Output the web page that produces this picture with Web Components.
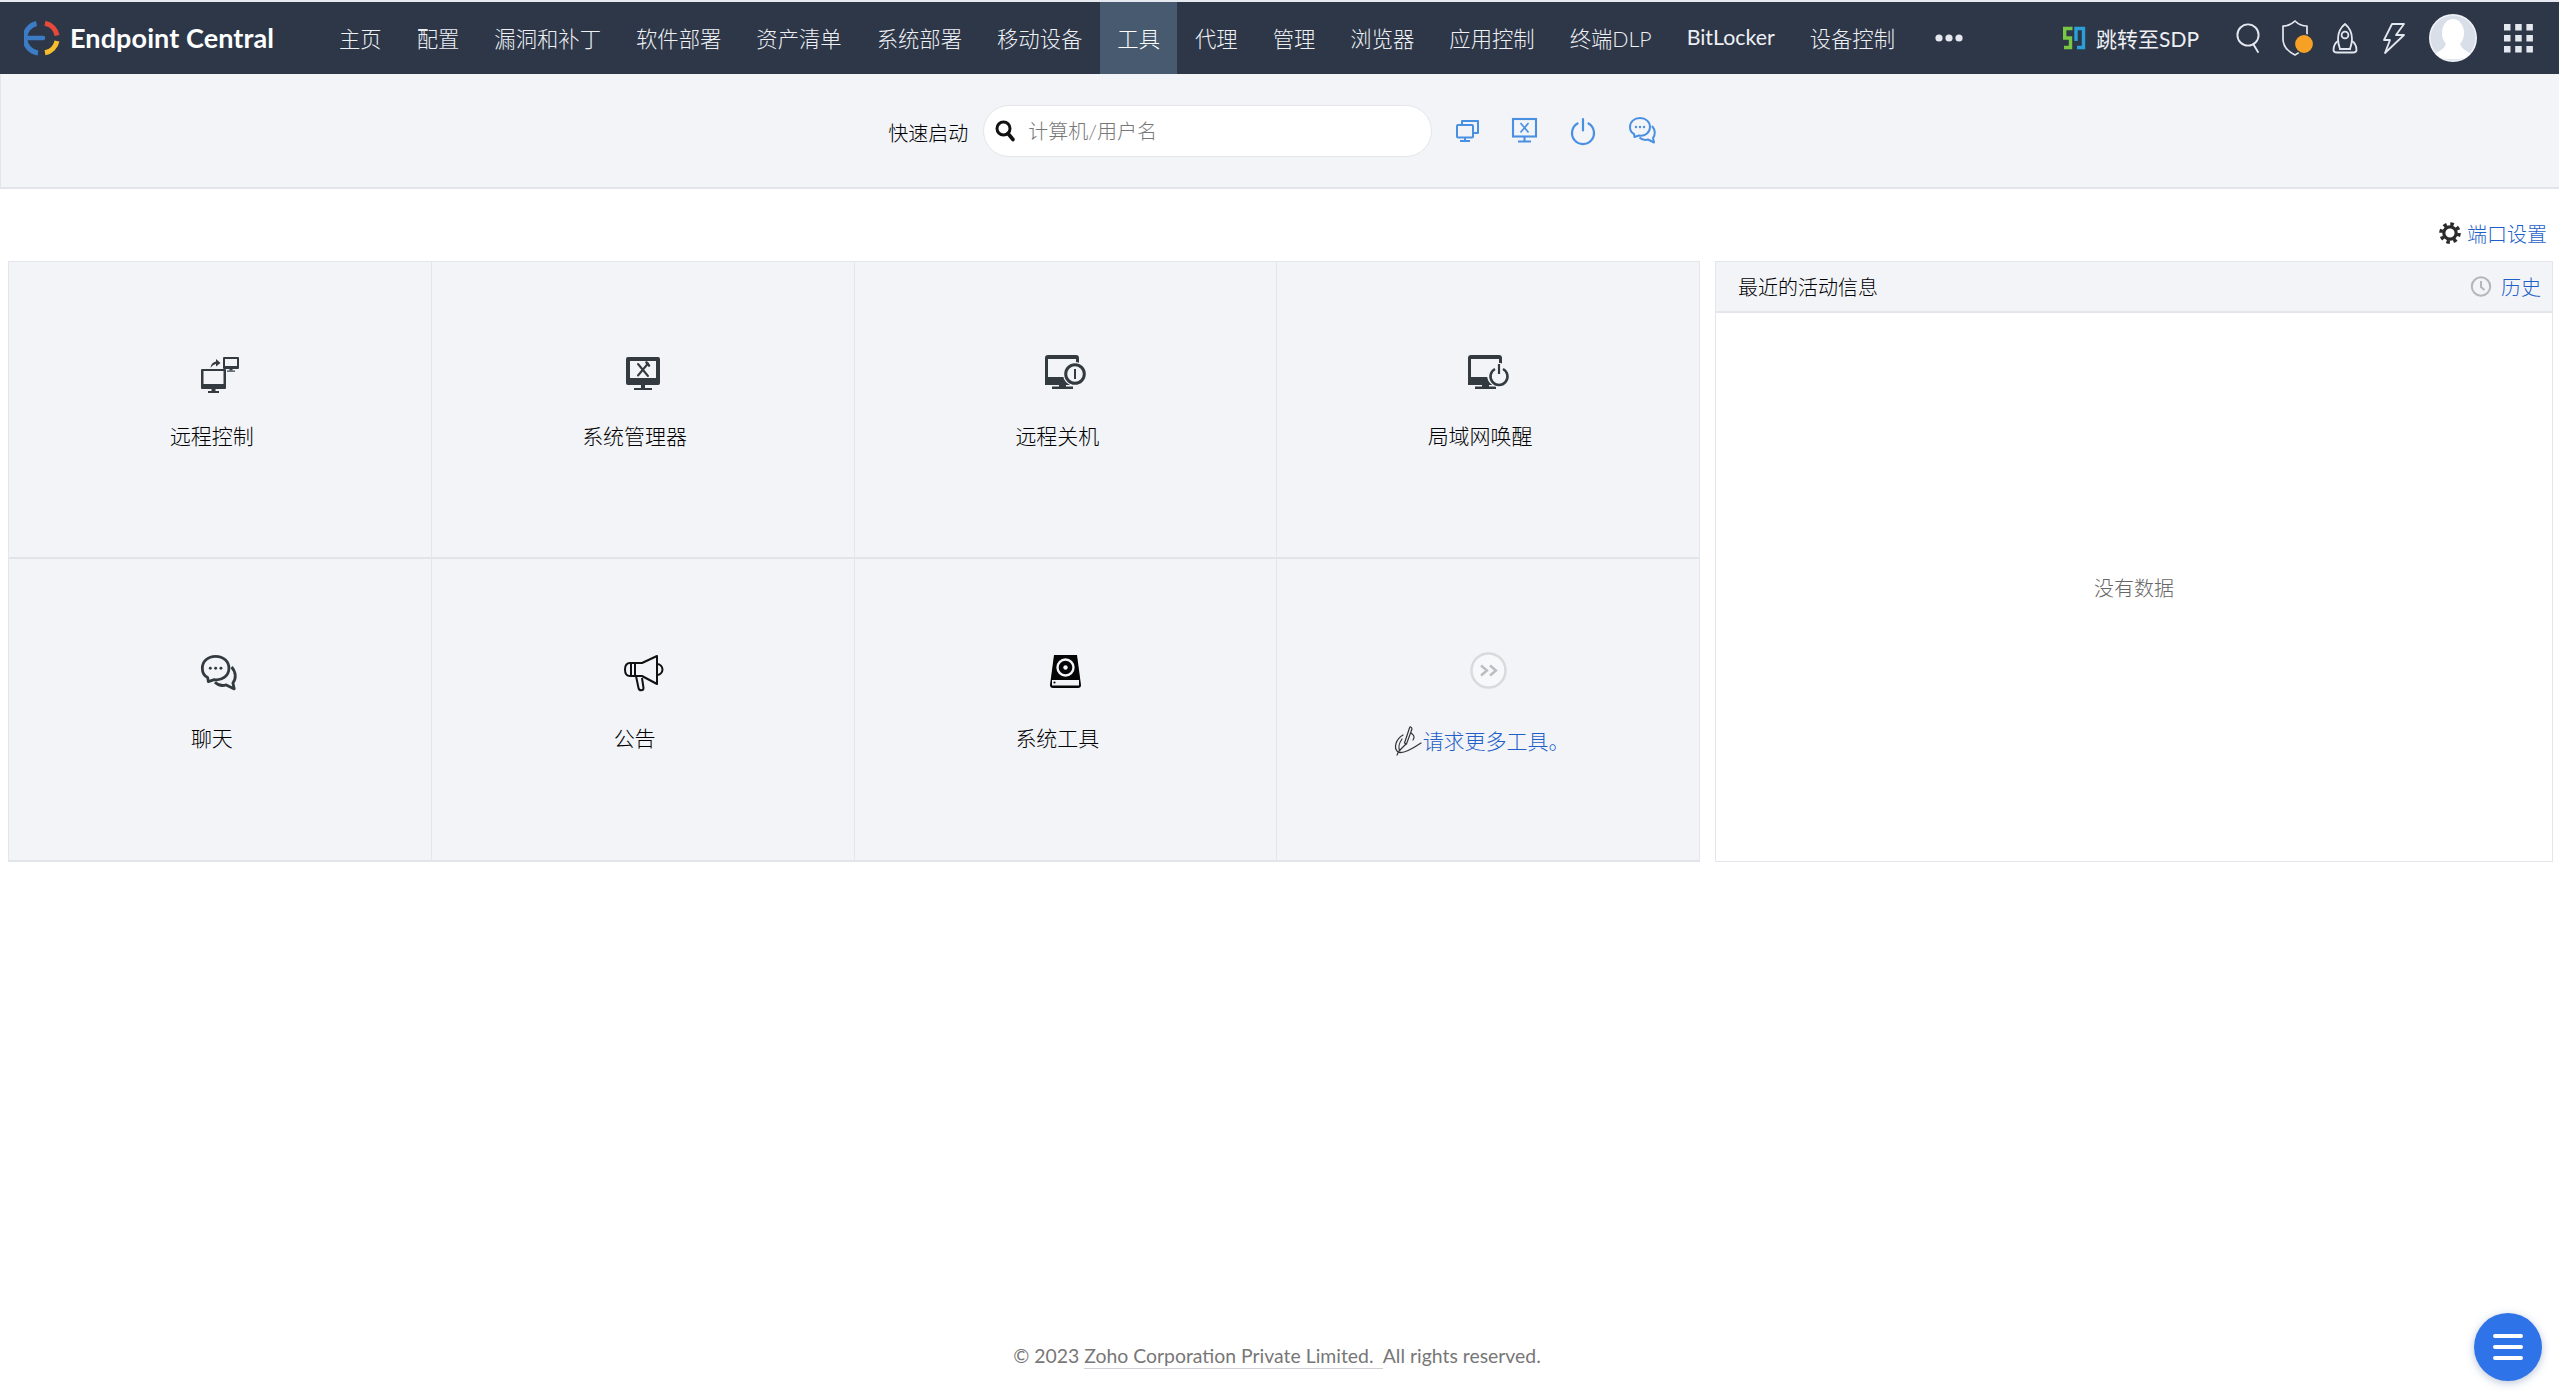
<!DOCTYPE html>
<html lang="zh-CN">
<head>
<meta charset="utf-8">
<title>Endpoint Central</title>
<style>
html,body{margin:0;padding:0;height:100%;overflow:hidden;background:#fff}
body{font-family:Lato,"Noto Sans CJK SC",sans-serif;font-size:20px;color:#333}
</style>
</head>
<body>
<ec-app>
  <ec-header slot="header">
    <ec-logo slot="logo">Endpoint Central</ec-logo>
    <ec-nav-item>主页</ec-nav-item>
    <ec-nav-item>配置</ec-nav-item>
    <ec-nav-item>漏洞和补丁</ec-nav-item>
    <ec-nav-item>软件部署</ec-nav-item>
    <ec-nav-item>资产清单</ec-nav-item>
    <ec-nav-item>系统部署</ec-nav-item>
    <ec-nav-item>移动设备</ec-nav-item>
    <ec-nav-item active>工具</ec-nav-item>
    <ec-nav-item>代理</ec-nav-item>
    <ec-nav-item>管理</ec-nav-item>
    <ec-nav-item>浏览器</ec-nav-item>
    <ec-nav-item>应用控制</ec-nav-item>
    <ec-nav-item>终端DLP</ec-nav-item>
    <ec-nav-item style="font-weight:400">BitLocker</ec-nav-item>
    <ec-nav-item>设备控制</ec-nav-item>
    <ec-icon slot="more" name="dots"></ec-icon>
    <ec-sdp-link slot="tools">跳转至SDP</ec-sdp-link>
    <ec-icon slot="tools" name="hsearch" style="margin-left:37px"></ec-icon>
    <ec-icon slot="tools" name="shield" style="margin-left:19px"></ec-icon>
    <ec-icon slot="tools" name="rocket" style="margin-left:17px"></ec-icon>
    <ec-icon slot="tools" name="bolt" style="margin-left:25px"></ec-icon>
    <ec-icon slot="tools" name="avatar" style="margin-left:24px"></ec-icon>
    <ec-icon slot="tools" name="apps" style="margin-left:27px"></ec-icon>
  </ec-header>

  <ec-quick-bar slot="quick">
    <span slot="label">快速启动</span>
    <ec-search-field slot="field">计算机/用户名</ec-search-field>
    <ec-icon slot="actions" name="bmonitors" style="margin-left:23.500px"></ec-icon>
    <ec-icon slot="actions" name="btools" style="margin-left:32px"></ec-icon>
    <ec-icon slot="actions" name="bpower" style="margin-left:34px"></ec-icon>
    <ec-icon slot="actions" name="bchat" style="margin-left:34px"></ec-icon>
  </ec-quick-bar>

  <ec-settings-link slot="settings">端口设置</ec-settings-link>

  <ec-tool-grid slot="tools">
    <ec-tool-tile style="--pad:95px;--gap:31px"><ec-icon slot="icon" name="remote"></ec-icon>远程控制</ec-tool-tile>
    <ec-tool-tile style="--pad:95px;--gap:31px"><ec-icon slot="icon" name="sysmgr"></ec-icon>系统管理器</ec-tool-tile>
    <ec-tool-tile style="--pad:93px;--gap:33px"><ec-icon slot="icon" name="shutdown"></ec-icon>远程关机</ec-tool-tile>
    <ec-tool-tile style="--pad:93px;--gap:33px" last><ec-icon slot="icon" name="wol"></ec-icon>局域网唤醒</ec-tool-tile>
    <ec-tool-tile style="--pad:96px;--gap:34.500px" bottom><ec-icon slot="icon" name="chat"></ec-icon>聊天</ec-tool-tile>
    <ec-tool-tile style="--pad:96px;--gap:34.500px" bottom><ec-icon slot="icon" name="mega"></ec-icon>公告</ec-tool-tile>
    <ec-tool-tile style="--pad:96px;--gap:34.500px" bottom><ec-icon slot="icon" name="disk"></ec-icon>系统工具</ec-tool-tile>
    <ec-tool-tile style="--pad:93px;--gap:38px" bottom last><ec-icon slot="icon" name="more"></ec-icon><ec-request-link>请求更多工具。</ec-request-link></ec-tool-tile>
  </ec-tool-grid>

  <ec-activity-panel slot="panel">
    <span slot="title">最近的活动信息</span>
    <span slot="history">历史</span>
    没有数据
  </ec-activity-panel>

  <ec-footer slot="footer">© 2023 <u>Zoho Corporation Private Limited.&nbsp; </u>All rights reserved.</ec-footer>
  <ec-fab slot="fab"></ec-fab>
</ec-app>

<script>
const BLUE='#4a90e2', DK='#333a40', HL='#e4e7ee', BG='#f2f4f8', HD='#2d3748';
const ICONS={
 dots:[28,8,`<g fill="${HL}"><circle cx="4" cy="4" r="3.6"/><circle cx="14" cy="4" r="3.6"/><circle cx="24" cy="4" r="3.6"/></g>`],
 hsearch:[26,29,`<g fill="none" stroke="${HL}" stroke-width="1.9"><circle cx="12" cy="11" r="10.6"/><path d="M17.5 20.5L22 28" stroke-linecap="round"/></g>`],
 shield:[34,36,`<path d="M14 1C10.5 4.500 6 6 2 6V19C2 27 8 32 14 35C20 32 26 27 26 19V6C22 6 17.500 4.500 14 1Z" fill="none" stroke="${HL}" stroke-width="1.700" stroke-linejoin="round"/><circle cx="23" cy="24" r="9.600" fill="#f6a125" stroke="${HD}" stroke-width="1.400"/>`],
 rocket:[26,31,`<g fill="none" stroke="${HL}" stroke-width="1.800" stroke-linejoin="round"><path d="M13 1C8 5 6 10 6 16C6 20 7 23 8 26H18C19 23 20 20 20 16C20 10 18 5 13 1Z"/><circle cx="13" cy="12" r="3.400"/><path d="M6 18C3 20 1.500 23 1.500 27C1.500 29 3 29.500 5 29.500H21C23 29.500 24.500 29 24.500 27C24.500 23 23 20 20 18"/><path d="M7 26H19"/></g>`],
 bolt:[22,31,`<path d="M9 1H21L13 12H21L2 30L7 17H1Z" fill="none" stroke="${HL}" stroke-width="1.800" stroke-linejoin="round"/>`],
 avatar:[48,48,`<defs><clipPath id="c"><circle cx="24" cy="24" r="23.500"/></clipPath></defs><circle cx="24" cy="24" r="24" fill="#f1f3f7"/><g clip-path="url(#c)"><circle cx="24" cy="24" r="22.500" fill="#d9dfe9"/><ellipse cx="24" cy="19" rx="11" ry="14" fill="#fff"/><path d="M17 28C17 34 12 36 6 40C10 47 38 47 42 40C36 36 31 34 31 28Z" fill="#fff"/></g>`],
 apps:[29,28,`<g fill="${HL}">${[0,11,22].map(y=>[0,11.200,22.400].map(x=>`<rect x="${x}" y="${y}" width="6.500" height="6.500"/>`).join('')).join('')}</g>`],
 bmonitors:[24,23,`<g fill="none" stroke="${BLUE}" stroke-width="2" stroke-linejoin="round"><rect x="1" y="6" width="16" height="12.500" rx="1"/><path d="M6 6V2H22V14H17"/><path d="M9 18.500V21.500M4 22H14"/></g>`],
 btools:[25,25,`<g fill="none" stroke="${BLUE}" stroke-width="2.100"><rect x="1" y="1" width="23" height="17.500"/><path d="M12.500 18.500V23M6 23.500H19"/><path d="M8.500 5L16.500 14.500M16.500 5L8.500 14.500" stroke-width="1.700"/></g>`],
 bpower:[24,26,`<g fill="none" stroke="${BLUE}" stroke-width="2.200" stroke-linecap="round"><path d="M6.500 5.500A11 11 0 1 0 17.500 5.500"/><path d="M12 1V12.500"/></g>`],
 bchat:[28,27,`<g fill="none" stroke="${BLUE}" stroke-width="2" stroke-linejoin="round"><path d="M11 1C5 1 1 5 1 10C1 13.500 3 16 5 17L5.500 20L10 18.500C16 19.500 21 15.500 21 10C21 5 17 1 11 1Z"/><path d="M23 9C26.500 13 26.500 18 24 21L25 25.500L19 22.500C15.500 23.500 12.500 22.500 10.500 20.500"/></g><g fill="${BLUE}"><circle cx="7" cy="10" r="1.200"/><circle cx="11" cy="10" r="1.200"/><circle cx="15" cy="10" r="1.200"/></g>`],
 qsearch:[20,21,`<g fill="none" stroke="#111"><circle cx="8.500" cy="8.500" r="6.500" stroke-width="3"/><path d="M13 13.500L18 19.500" stroke-width="3.600" stroke-linecap="round"/></g>`],
 remote:[38,36,`<g fill="${DK}"><path fill-rule="evenodd" d="M1 12H24Q25 12 25 13V31Q25 32 24 32H1Q0 32 0 31V13Q0 12 1 12ZM2.500 14V27H22.500V14Z"/><rect x="10.500" y="32" width="4" height="2"/><rect x="7" y="34" width="11" height="2"/><path fill-rule="evenodd" d="M23 0H37Q38 0 38 1V11Q38 12 37 12H23Q22 12 22 11V1Q22 0 23 0ZM24 2V9H36V2Z"/><rect x="28.500" y="12" width="3" height="1.500"/><rect x="26" y="13.500" width="8" height="1.200"/><path d="M9.500 11C10 7 12 5 15 4.500V2L19.500 6L15 9.500V7C13 7.500 11 8.500 9.500 11Z"/></g>`],
 sysmgr:[34,33,`<g fill="${DK}"><path fill-rule="evenodd" d="M2 0H32Q34 0 34 2V26Q34 28 32 28H2Q0 28 0 26V2Q0 0 2 0ZM4 4V21H30V4Z"/><rect x="15" y="28" width="4" height="3"/><rect x="8" y="31" width="18" height="2"/></g><g fill="none" stroke="${DK}" stroke-linecap="round"><path d="M12 7L22 19" stroke-width="2"/><path d="M22 6.500L12 18.500" stroke-width="2"/><path d="M20.500 5.500L23 8.500" stroke-width="2.600"/></g>`],
 shutdown:[40,34,`<path fill="${DK}" fill-rule="evenodd" d="M3 0H31Q34 0 34 3V30H0V3Q0 0 3 0ZM3 4V22H31V4Z"/><rect x="14" y="30" width="7" height="2" fill="${DK}"/><rect x="7" y="31.500" width="21" height="2.500" fill="${DK}"/><circle cx="30" cy="19" r="12" fill="${BG}"/><circle cx="30" cy="19" r="9.300" fill="none" stroke="${DK}" stroke-width="3"/><rect x="29" y="14" width="2" height="10" fill="${DK}"/>`],
 wol:[40,34,`<path fill="${DK}" fill-rule="evenodd" d="M3 0H31Q34 0 34 3V30H0V3Q0 0 3 0ZM3 4V22H31V4Z"/><rect x="14" y="30" width="7" height="2" fill="${DK}"/><rect x="7" y="31.500" width="21" height="2.500" fill="${DK}"/><circle cx="31" cy="20" r="12" fill="${BG}"/><rect x="29" y="8" width="4" height="6" fill="${BG}"/><path d="M27 14A8.500 8.500 0 1 0 35 14" fill="none" stroke="${DK}" stroke-width="2.500"/><path d="M31 9V19" stroke="${DK}" stroke-width="2.200"/>`],
 chat:[37,36,`<g transform="scale(1.330)"><g fill="none" stroke="${DK}" stroke-width="2.100" stroke-linejoin="round"><path d="M11 1C5 1 1 5 1 10C1 13.500 3 16 5 17L5.500 20L10 18.500C16 19.500 21 15.500 21 10C21 5 17 1 11 1Z"/><path d="M23 9C26.500 13 26.500 18 24 21L25 25.500L19 22.500C15.500 23.500 12.500 22.500 10.500 20.500"/></g><g fill="${DK}"><circle cx="7" cy="10" r="1.100"/><circle cx="11" cy="10" r="1.100"/><circle cx="15" cy="10" r="1.100"/></g></g>`],
 mega:[38,36,`<g fill="none" stroke="#111" stroke-width="2" stroke-linejoin="round"><path d="M33 1L18 8H6C2.500 8 1 10.500 1 14.500C1 18.500 2.500 21 6 21H18L33 29Z" fill="${BG}"/><path d="M7 8V21M11 8V21"/><path d="M33 9A5.500 5.500 0 0 1 33 20"/><path d="M12 21L14.500 33C15 36 19.500 36 19.500 33L18 23"/></g>`],
 disk:[31,33,`<path d="M4 0H27L31 30Q31 33 28 33H3Q0 33 0 30Z" fill="#050505"/><circle cx="15.500" cy="12.500" r="8" fill="none" stroke="#f2f4f8" stroke-width="2.400"/><circle cx="15.500" cy="12.500" r="2.200" fill="#f2f4f8"/><rect x="2" y="25" width="27" height="5.500" fill="#f2f4f8"/><circle cx="4.500" cy="27.500" r="1.100" fill="#050505"/>`],
 more:[37,37,`<circle cx="18.500" cy="18.500" r="17" fill="#f7f8fa" stroke="#d9dadc" stroke-width="2.500"/><path d="M11 13.500L17 18.500L11 23.500M20 13.500L26 18.500L20 23.500" fill="none" stroke="#bcbdc0" stroke-width="2.400"/>`],
 pen:[28,30,`<g fill="none" stroke="#333" stroke-width="1.200" stroke-linecap="round"><path d="M15.500 2L10.500 17L12.500 18L18 3C17.500 .5 16 .5 15.500 2Z"/><path d="M9 9C2 13 -1 22 4 26C9 29 21 21 27 17"/><path d="M8 13C5 17 4 22 6 25M12 18L6 24M5 25L3 29"/><path d="M17 7C20 9 21 11 19 14"/></g>`],
 gear:[22,22,`<g fill="none" stroke="#2b2b2b"><circle cx="11" cy="11" r="6.200" stroke-width="3.200"/><circle cx="11" cy="11" r="9" stroke-width="3.600" stroke-dasharray="3.500 3.570"/></g>`],
 clock:[22,21,`<g fill="none" stroke="#b4b6ba" stroke-width="2"><circle cx="11" cy="10.500" r="9.200"/><path d="M11 5V11L14.500 14"/></g>`],
 sdp:[24,24,`<g fill="none" stroke-width="3.400"><path d="M10.500 2.500H2.700V12H8.500V21.500H2" stroke="#79c843"/><path d="M14 15V2.500H21.500V21.500H15" stroke="#2b9fd8"/></g>`],
 logo:[36,36,`<g fill="none" stroke-width="5"><path d="M12.500 3.500A15 15 0 0 0 14 33" stroke="#3b7cc4"/><path d="M4 18H19" stroke="#3b7cc4" stroke-linecap="round" stroke-width="4.500"/><path d="M21 3.300A15 15 0 0 1 33 15.500" stroke="#e5493a"/><path d="M33 21A15 15 0 0 1 21 32.800" stroke="#f6bd2c"/></g>`]
};
function shadow(el,html){el.attachShadow({mode:'open'}).innerHTML=html;}
function def(name,html){customElements.define(name,class extends HTMLElement{constructor(){super();shadow(this,html);}});}

customElements.define('ec-icon',class extends HTMLElement{
  constructor(){super();this.attachShadow({mode:'open'});}
  connectedCallback(){
    const [w,h,b]=ICONS[this.getAttribute('name')];
    this.shadowRoot.innerHTML=`<style>:host{display:inline-flex;flex:none;width:${w}px;height:${h}px}svg{display:block;overflow:visible}</style><svg xmlns="http://www.w3.org/2000/svg" width="${w}" height="${h}" viewBox="0 0 ${w} ${h}">${b}</svg>`;
  }
});

def('ec-app',`<style>
:host{display:flex;flex-direction:column;height:100vh;min-height:1399px;position:relative;background:#fff}
.row{display:grid;grid-template-columns:1692px 838px;gap:15px;padding:0 6px 0 8px;height:601px}
.footer{margin-top:auto}
</style>
<slot name="header"></slot><slot name="quick"></slot><slot name="settings"></slot>
<div class="row"><slot name="tools"></slot><slot name="panel"></slot></div>
<div class="footer"><slot name="footer"></slot></div><slot name="fab"></slot>`);

def('ec-header',`<style>
:host{display:flex;align-items:center;flex:none;height:72px;border-top:2px solid #e6e9ef;background:${HD};color:#eef0f4;font-size:21.33px}
.logo{flex:0 0 321.500px;display:flex}
nav{display:flex;height:100%}
.more{display:flex;align-items:center;margin-left:22px}
.tools{display:flex;align-items:center;margin-left:auto;padding-right:26px}
</style>
<div class="logo"><slot name="logo"></slot></div>
<nav><slot></slot></nav>
<div class="more"><slot name="more"></slot></div>
<div class="tools"><slot name="tools"></slot></div>`);

def('ec-logo',`<style>
:host{display:flex;align-items:center;gap:10px;padding-left:24px;padding-bottom:2px;color:#fff;font-size:27px;font-weight:700;letter-spacing:.1px;white-space:nowrap}
svg{display:block;margin-top:2px}
</style><svg width="36" height="36" viewBox="0 0 36 36">${ICONS.logo[2]}</svg><slot></slot>`);

def('ec-nav-item',`<style>
:host{display:flex;align-items:center;box-sizing:border-box;height:100%;padding:0 17.500px 2px;white-space:nowrap;font-weight:300}
:host([active]){background:#475a70;color:#fff}
</style><slot></slot>`);

def('ec-sdp-link',`<style>
:host{display:flex;align-items:center;gap:10px;color:#eef0f4;font-size:21px;font-weight:400;white-space:nowrap}
</style><ec-icon name="sdp"></ec-icon><slot></slot>`);

def('ec-quick-bar',`<style>
:host{display:flex;align-items:center;justify-content:center;flex:none;height:113px;box-sizing:content-box;background:${BG};border-left:1px solid #e3e6eb;border-bottom:2px solid #e1e4ea;padding-right:15px}
.label{padding-top:4px;margin-right:15px;font-size:20px;font-weight:300;color:#000;white-space:nowrap}
.acts{display:flex;align-items:center}
</style>
<div class="label"><slot name="label"></slot></div>
<slot name="field"></slot>
<div class="acts"><slot name="actions"></slot></div>`);

def('ec-search-field',`<style>
:host{display:flex;align-items:center;gap:13px;box-sizing:border-box;width:449px;height:52px;padding-left:11px;background:#fff;border:1px solid #e4e6ea;border-radius:26px;color:#777;font-size:20px;font-weight:300;white-space:nowrap}
</style><ec-icon name="qsearch"></ec-icon><span><slot></slot></span>`);

def('ec-settings-link',`<style>
:host{display:flex;align-items:center;justify-content:flex-end;gap:6px;flex:none;height:72px;padding:16px 12px 0 0;box-sizing:border-box;color:#1f5fc8;font-size:20px;font-weight:300}
</style><ec-icon name="gear"></ec-icon><span><slot></slot></span>`);

def('ec-tool-grid',`<style>
:host{display:grid;grid-template-columns:repeat(4,1fr);grid-template-rows:297px 303px;height:601px;box-sizing:border-box;border:1px solid #e3e6eb;border-width:1px 0 0 1px;background:${BG}}
</style><slot></slot>`);

def('ec-tool-tile',`<style>
:host{display:flex;flex-direction:column;align-items:center;box-sizing:border-box;padding-top:var(--pad);background:${BG};border-right:1px solid #e3e6eb;border-bottom:2px solid #e1e4e9;min-width:0}
.icon{height:36px;display:flex;align-items:flex-start;justify-content:center}
.label{margin-top:var(--gap);padding-right:16px;line-height:24px;font-size:21px;font-weight:300;color:#000;white-space:nowrap}
</style><div class="icon"><slot name="icon"></slot></div><div class="label"><slot></slot></div>`);

def('ec-request-link',`<style>
:host{display:inline-flex;align-items:center;gap:1px;color:#1f5fc8;margin-left:3px}
</style><ec-icon name="pen"></ec-icon><span><slot></slot></span>`);

def('ec-activity-panel',`<style>
:host{display:flex;flex-direction:column;height:601px;box-sizing:border-box;border:1px solid #e3e6eb;background:#fff;font-size:20px;font-weight:300}
header{display:flex;align-items:center;justify-content:space-between;height:51px;flex:none;box-sizing:border-box;padding:0 11px 0 22px;background:${BG};border-bottom:2px solid #e3e6eb;color:#000}
.hist{display:flex;align-items:center;gap:9px;color:#1f5fc8}
.empty{flex:1;display:flex;align-items:center;justify-content:center;color:#666;padding-top:0}
</style>
<header><span><slot name="title"></slot></span><span class="hist"><ec-icon name="clock"></ec-icon><slot name="history"></slot></span></header>
<div class="empty"><slot></slot></div>`);

def('ec-footer',`<style>
:host{display:block;padding:0 5px 30px 0;box-sizing:border-box;text-align:center;color:#777;font-size:19.400px;font-weight:400;line-height:26px}
::slotted(u){text-decoration:none;border-bottom:1px solid #cdd0d4;padding-bottom:1px}
</style><slot></slot>`);

def('ec-fab',`<style>
:host{position:absolute;left:2474px;top:1313px;width:68px;height:68px;border-radius:50%;background:#2f73e8;box-shadow:0 2px 8px rgba(60,90,140,.35);display:flex;flex-direction:column;align-items:center;justify-content:center;gap:7px}
i{display:block;width:30px;height:4px;border-radius:2px;background:#fff}
</style><i></i><i></i><i></i>`);
</script>
</body>
</html>
